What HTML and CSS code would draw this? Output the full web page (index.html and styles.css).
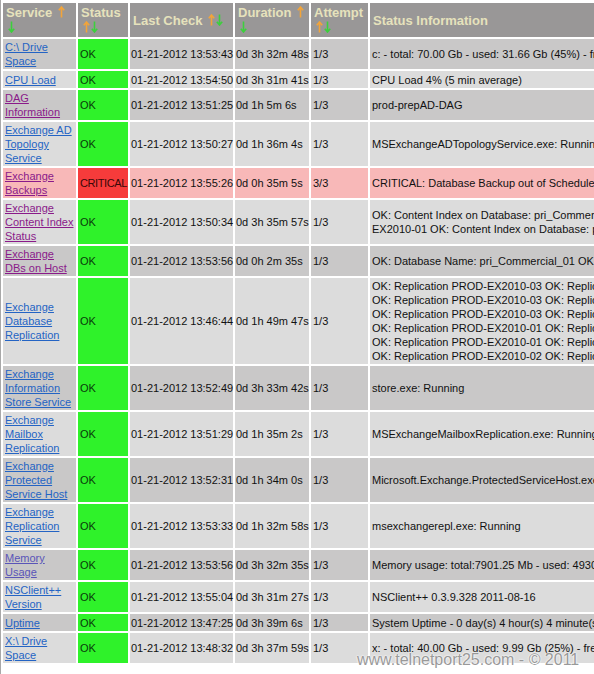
FILE: index.html
```html
<!DOCTYPE html>
<html>
<head>
<meta charset="utf-8">
<title>Service Status</title>
<link rel="stylesheet" href="styles.css">
</head>
<body>
<div class="page">
<table class="status">
  <colgroup>
    <col class="c-svc"><col class="c-st"><col class="c-lc"><col class="c-du"><col class="c-at"><col class="c-info">
  </colgroup>
  <thead>
    <tr>
      <th>Service<svg class="arr up" viewBox="0 0 7 12"><path d="M3.5 11.5V1M0.8 4.2L3.5 1L6.2 4.2"/></svg><br><svg class="arr dn" viewBox="0 0 7 12"><path d="M3.5 0.5V11M0.8 7.8L3.5 11L6.2 7.8"/></svg></th>
      <th>Status<br><svg class="arr up" viewBox="0 0 7 12"><path d="M3.5 11.5V1M0.8 4.2L3.5 1L6.2 4.2"/></svg><svg class="arr dn" viewBox="0 0 7 12"><path d="M3.5 0.5V11M0.8 7.8L3.5 11L6.2 7.8"/></svg></th>
      <th>Last Check<svg class="arr up" viewBox="0 0 7 12"><path d="M3.5 11.5V1M0.8 4.2L3.5 1L6.2 4.2"/></svg><svg class="arr dn" viewBox="0 0 7 12"><path d="M3.5 0.5V11M0.8 7.8L3.5 11L6.2 7.8"/></svg></th>
      <th>Duration<svg class="arr up" viewBox="0 0 7 12"><path d="M3.5 11.5V1M0.8 4.2L3.5 1L6.2 4.2"/></svg><br><svg class="arr dn" viewBox="0 0 7 12"><path d="M3.5 0.5V11M0.8 7.8L3.5 11L6.2 7.8"/></svg></th>
      <th>Attempt<br><svg class="arr up" viewBox="0 0 7 12"><path d="M3.5 11.5V1M0.8 4.2L3.5 1L6.2 4.2"/></svg><svg class="arr dn" viewBox="0 0 7 12"><path d="M3.5 0.5V11M0.8 7.8L3.5 11L6.2 7.8"/></svg></th>
      <th>Status Information</th>
    </tr>
  </thead>
  <tbody>
    <tr class="even">
      <td><a href="#">C:\ Drive Space</a></td><td class="ok">OK</td><td class="nw">01-21-2012 13:53:43</td><td class="nw">0d 3h 32m 48s</td><td>1/3</td><td class="info">c: - total: 70.00 Gb - used: 31.66 Gb (45%) - free 38.34 Gb (55%)</td>
    </tr>
    <tr class="odd">
      <td><a href="#">CPU Load</a></td><td class="ok">OK</td><td class="nw">01-21-2012 13:54:50</td><td class="nw">0d 3h 31m 41s</td><td>1/3</td><td class="info">CPU Load 4% (5 min average)</td>
    </tr>
    <tr class="even">
      <td><a href="#" class="v">DAG Information</a></td><td class="ok">OK</td><td class="nw">01-21-2012 13:51:25</td><td class="nw">0d 1h 5m 6s</td><td>1/3</td><td class="info">prod-prepAD-DAG</td>
    </tr>
    <tr class="odd">
      <td><a href="#">Exchange AD Topology Service</a></td><td class="ok">OK</td><td class="nw">01-21-2012 13:50:27</td><td class="nw">0d 1h 36m 4s</td><td>1/3</td><td class="info">MSExchangeADTopologyService.exe: Running</td>
    </tr>
    <tr class="crit">
      <td><a href="#" class="v">Exchange Backups</a></td><td class="critical">CRITICAL</td><td class="nw">01-21-2012 13:55:26</td><td class="nw">0d 0h 35m 5s</td><td>3/3</td><td class="info">CRITICAL: Database Backup out of Schedule: pri_Commercial_01</td>
    </tr>
    <tr class="odd">
      <td><a href="#" class="v">Exchange Content Index Status</a></td><td class="ok">OK</td><td class="nw">01-21-2012 13:50:34</td><td class="nw">0d 3h 35m 57s</td><td>1/3</td><td class="info">OK: Content Index on Database: pri_Commercial_01 Server: PROD-<br>EX2010-01 OK: Content Index on Database: pri_Commercial_02</td>
    </tr>
    <tr class="even">
      <td><a href="#" class="v">Exchange DBs on Host</a></td><td class="ok">OK</td><td class="nw">01-21-2012 13:53:56</td><td class="nw">0d 0h 2m 35s</td><td>1/3</td><td class="info">OK: Database Name: pri_Commercial_01 OK: Database Name: pri_Commercial_02</td>
    </tr>
    <tr class="odd">
      <td><a href="#">Exchange Database Replication</a></td><td class="ok">OK</td><td class="nw">01-21-2012 13:46:44</td><td class="nw">0d 1h 49m 47s</td><td>1/3</td><td class="info">OK: Replication PROD-EX2010-03 OK: Replication Health<br>OK: Replication PROD-EX2010-03 OK: Replication Health<br>OK: Replication PROD-EX2010-03 OK: Replication Health<br>OK: Replication PROD-EX2010-01 OK: Replication Health<br>OK: Replication PROD-EX2010-01 OK: Replication Health<br>OK: Replication PROD-EX2010-02 OK: Replication Health</td>
    </tr>
    <tr class="even">
      <td><a href="#">Exchange Information Store Service</a></td><td class="ok">OK</td><td class="nw">01-21-2012 13:52:49</td><td class="nw">0d 3h 33m 42s</td><td>1/3</td><td class="info">store.exe: Running</td>
    </tr>
    <tr class="odd">
      <td><a href="#">Exchange Mailbox Replication</a></td><td class="ok">OK</td><td class="nw">01-21-2012 13:51:29</td><td class="nw">0d 1h 35m 2s</td><td>1/3</td><td class="info">MSExchangeMailboxReplication.exe: Running</td>
    </tr>
    <tr class="even">
      <td><a href="#">Exchange Protected Service Host</a></td><td class="ok">OK</td><td class="nw">01-21-2012 13:52:31</td><td class="nw">0d 1h 34m 0s</td><td>1/3</td><td class="info">Microsoft.Exchange.ProtectedServiceHost.exe: Running</td>
    </tr>
    <tr class="odd">
      <td><a href="#">Exchange Replication Service</a></td><td class="ok">OK</td><td class="nw">01-21-2012 13:53:33</td><td class="nw">0d 1h 32m 58s</td><td>1/3</td><td class="info">msexchangerepl.exe: Running</td>
    </tr>
    <tr class="even">
      <td><a href="#" class="v2">Memory Usage</a></td><td class="ok">OK</td><td class="nw">01-21-2012 13:53:56</td><td class="nw">0d 3h 32m 35s</td><td>1/3</td><td class="info">Memory usage: total:7901.25 Mb - used: 4930.12 Mb (62%) - free: 2971.13 Mb</td>
    </tr>
    <tr class="odd">
      <td><a href="#">NSClient++ Version</a></td><td class="ok">OK</td><td class="nw">01-21-2012 13:55:04</td><td class="nw">0d 3h 31m 27s</td><td>1/3</td><td class="info">NSClient++ 0.3.9.328 2011-08-16</td>
    </tr>
    <tr class="even">
      <td><a href="#">Uptime</a></td><td class="ok">OK</td><td class="nw">01-21-2012 13:47:25</td><td class="nw">0d 3h 39m 6s</td><td>1/3</td><td class="info">System Uptime - 0 day(s) 4 hour(s) 4 minute(s)</td>
    </tr>
    <tr class="odd">
      <td><a href="#">X:\ Drive Space</a></td><td class="ok">OK</td><td class="nw">01-21-2012 13:48:32</td><td class="nw">0d 3h 37m 59s</td><td>1/3</td><td class="info">x: - total: 40.00 Gb - used: 9.99 Gb (25%) - free 30.01 Gb (75%)</td>
    </tr>
  </tbody>
</table>
</div>
<div class="watermark">www.telnetport25.com - © 2011</div>
</body>
</html>
```
FILE: styles.css
```css
html, body {
  margin: 0;
  padding: 0;
  overflow: hidden;
  background: #ffffff;
}
body {
  width: 594px;
  height: 674px;
  position: relative;
  font-family: "Liberation Sans", Arial, sans-serif;
}
.page {
  border-left: 1px solid #a8a8a8;
  padding-top: 1px;
  min-height: 673px;
  width: 1100px;
}
.status {
  table-layout: fixed;
  border-collapse: separate;
  border-spacing: 2px;
  width: 1011px;
}
.c-svc { width: 73px; }
.c-st { width: 50px; }
.c-lc { width: 103px; }
.c-du { width: 74px; }
.c-at { width: 57px; }
.c-info { width: 640px; }

.status th {
  box-sizing: border-box;
  height: 34px;
  background: #999797;
  color: #e6e2bc;
  font-size: 13px;
  font-weight: bold;
  line-height: 15px;
  text-align: left;
  vertical-align: middle;
  padding: 2px 3px;
  white-space: nowrap;
  overflow: hidden;
}
.arr {
  display: inline-block;
  width: 7px;
  height: 12px;
  vertical-align: -1px;
  fill: none;
  stroke-width: 1.6;
}
.arr.up { stroke: #f2a43a; margin-left: 6px; }
.arr.dn { stroke: #3ccf3c; margin-left: 1px; }
th > br + .arr.dn, th > br + .arr.up { margin-left: 2px; }

.status td {
  box-sizing: border-box;
  height: 17px;
  font-size: 11px;
  line-height: 14px;
  color: #111111;
  padding: 1px 1px 1px 2px;
  vertical-align: middle;
  text-align: left;
}
.status td.nw { white-space: nowrap; padding-left: 1px; padding-right: 0; }
.even td { background: #c9c8c8; }
.odd td { background: #dcdcdc; }
.crit td { background: #f8b8b8; }
.status td.ok { background: #2ff22a; color: #0a3a0a; }
.status td.critical {
  background: #f63b3b;
  color: #3a0808;
  white-space: nowrap;
  overflow: hidden;
  padding-left: 2px;
  letter-spacing: -0.4px;
}
.status td.info { white-space: nowrap; overflow: hidden; }

.status a {
  color: #2464c4;
  text-decoration: underline;
}
.status a.v { color: #8a1a8a; }
.status a.v2 { color: #5a55b8; }

.watermark {
  position: absolute;
  left: 357px;
  top: 650px;
  font-size: 16px;
  line-height: 20px;
  color: rgba(120, 120, 120, 0.75);
  text-shadow: 0 0 2px #ffffff, 0 0 2px #ffffff;
  white-space: nowrap;
}
```
